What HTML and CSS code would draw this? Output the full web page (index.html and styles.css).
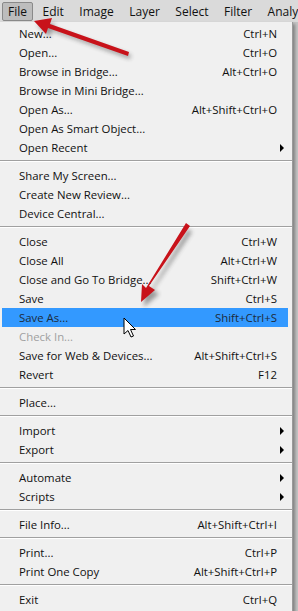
FILE: index.html
```html
<!DOCTYPE html>
<html lang="en">
<head>
  <meta charset="UTF-8" />
  <title>File menu</title>
  <link rel="stylesheet" href="styles.css">
</head>
<body>
  <div class="menubar">
    <span class="top-item active">File</span>
    <span class="top-item">Edit</span>
    <span class="top-item">Image</span>
    <span class="top-item">Layer</span>
    <span class="top-item">Select</span>
    <span class="top-item">Filter</span>
    <span class="top-item">Analysis</span>
  </div>

  <div class="screen">
    <div class="menu">
      <div class="row"><span>New...</span><span>Ctrl+N</span></div>
      <div class="row"><span>Open...</span><span>Ctrl+O</span></div>
      <div class="row"><span>Browse in Bridge...</span><span>Alt+Ctrl+O</span></div>
      <div class="row"><span>Browse in Mini Bridge...</span><span></span></div>
      <div class="row"><span>Open As...</span><span>Alt+Shift+Ctrl+O</span></div>
      <div class="row"><span>Open As Smart Object...</span><span></span></div>
      <div class="row sub"><span>Open Recent</span><span class="tri"></span></div>
      <div class="sep"></div>
      <div class="row"><span>Share My Screen...</span><span></span></div>
      <div class="row"><span>Create New Review...</span><span></span></div>
      <div class="row"><span>Device Central...</span><span></span></div>
      <div class="sep"></div>
      <div class="row"><span>Close</span><span>Ctrl+W</span></div>
      <div class="row"><span>Close All</span><span>Alt+Ctrl+W</span></div>
      <div class="row"><span>Close and Go To Bridge...</span><span>Shift+Ctrl+W</span></div>
      <div class="row"><span>Save</span><span>Ctrl+S</span></div>
      <div class="row hover"><span>Save As...</span><span>Shift+Ctrl+S</span></div>
      <div class="row disabled"><span>Check In...</span><span></span></div>
      <div class="row"><span>Save for Web &amp; Devices...</span><span>Alt+Shift+Ctrl+S</span></div>
      <div class="row"><span>Revert</span><span>F12</span></div>
      <div class="sep"></div>
      <div class="row"><span>Place...</span><span></span></div>
      <div class="sep"></div>
      <div class="row sub"><span>Import</span><span class="tri"></span></div>
      <div class="row sub"><span>Export</span><span class="tri"></span></div>
      <div class="sep"></div>
      <div class="row sub"><span>Automate</span><span class="tri"></span></div>
      <div class="row sub"><span>Scripts</span><span class="tri"></span></div>
      <div class="sep"></div>
      <div class="row"><span>File Info...</span><span>Alt+Shift+Ctrl+I</span></div>
      <div class="sep"></div>
      <div class="row"><span>Print...</span><span>Ctrl+P</span></div>
      <div class="row"><span>Print One Copy</span><span>Alt+Shift+Ctrl+P</span></div>
      <div class="sep"></div>
      <div class="row"><span>Exit</span><span>Ctrl+Q</span></div>
    </div>
    <div class="backdrop"></div>
  </div>

  <!-- annotation arrows drawn over the screenshot -->
  <svg class="overlay" width="298" height="611" viewBox="0 0 298 611">
    <defs>
      <filter id="blur"><feGaussianBlur stdDeviation="2" /></filter>
    </defs>
    <g fill="#333" opacity="0.45" filter="url(#blur)">
      <path d="M130 59 L52 31 L50 37 L37 25 L55 23 L53 28 L131 55 Z" />
      <path d="M192 232 L153 290 L159 294 L144 307 L145 288 L150 292 L188 229 Z" />
    </g>
    <g fill="#c8121a">
      <path d="M128 56 L48 28 L46 34 L34 21 L52 18 L50 24 L129 52 Z" />
      <path d="M190 226 L149 286 L155 290 L141 302 L142 284 L146 288 L186 223 Z" />
    </g>
    <path d="M124 318 L124 334 L128 330.5 L131 337 L133.5 336 L130.5 329.5 L135.5 329.5 Z"
          fill="#fff" stroke="#000" stroke-width="1" stroke-linejoin="round" />
  </svg>
</body>
</html>
```

FILE: styles.css
```css
body {
  margin: 0;
  width: 298px;
  height: 611px;
  overflow: hidden;
  position: relative;
  background: #c4c4c4;
  font-family: "Open Sans", "Noto Sans", sans-serif;
  font-size: 11.4px;
  color: #111;
}

.menubar {
  height: 22px;
  display: flex;
  align-items: center;
  gap: 3.5px;
  background: #dadada;
  white-space: nowrap;
  overflow: hidden;
  padding-left: 2px;
}

.top-item {
  font-size: 12px;
  padding: 0 5px;
  line-height: 17px;
  border: 1px solid transparent;
  color: #111;
}

.top-item.active {
  background: #bdbdbd;
  border-color: #8a8a8a;
  border-radius: 2px;
}

.screen {
  display: flex;
}

.menu {
  width: 290px;
  background: #f0f0f0;
  border-right: 1px solid #9a9a9a;
  padding: 2px 0 4px 2px;
  box-shadow: 2px 2px 3px rgba(0, 0, 0, 0.35);
}

.backdrop {
  flex: 1;
}

.row {
  height: 19px;
  display: flex;
  justify-content: space-between;
  align-items: center;
  padding: 0 15px 0 17px;
  white-space: nowrap;
}

.row.sub {
  padding-right: 8px;
}

.row.hover {
  background: #3399ff;
  color: #1d2b3a;
  margin-right: 4px;
  padding-right: 11px;
}

.row.disabled {
  color: #a0a0a0;
}

.tri {
  width: 0;
  height: 0;
  border-top: 4px solid transparent;
  border-bottom: 4px solid transparent;
  border-left: 4px solid #000;
}

.sep {
  height: 1px;
  margin: 3px 0 4px -2px;
  background: #a0a0a0;
  border-bottom: 1px solid #fff;
}

.overlay {
  position: absolute;
  left: 0;
  top: 0;
  pointer-events: none;
}
```
